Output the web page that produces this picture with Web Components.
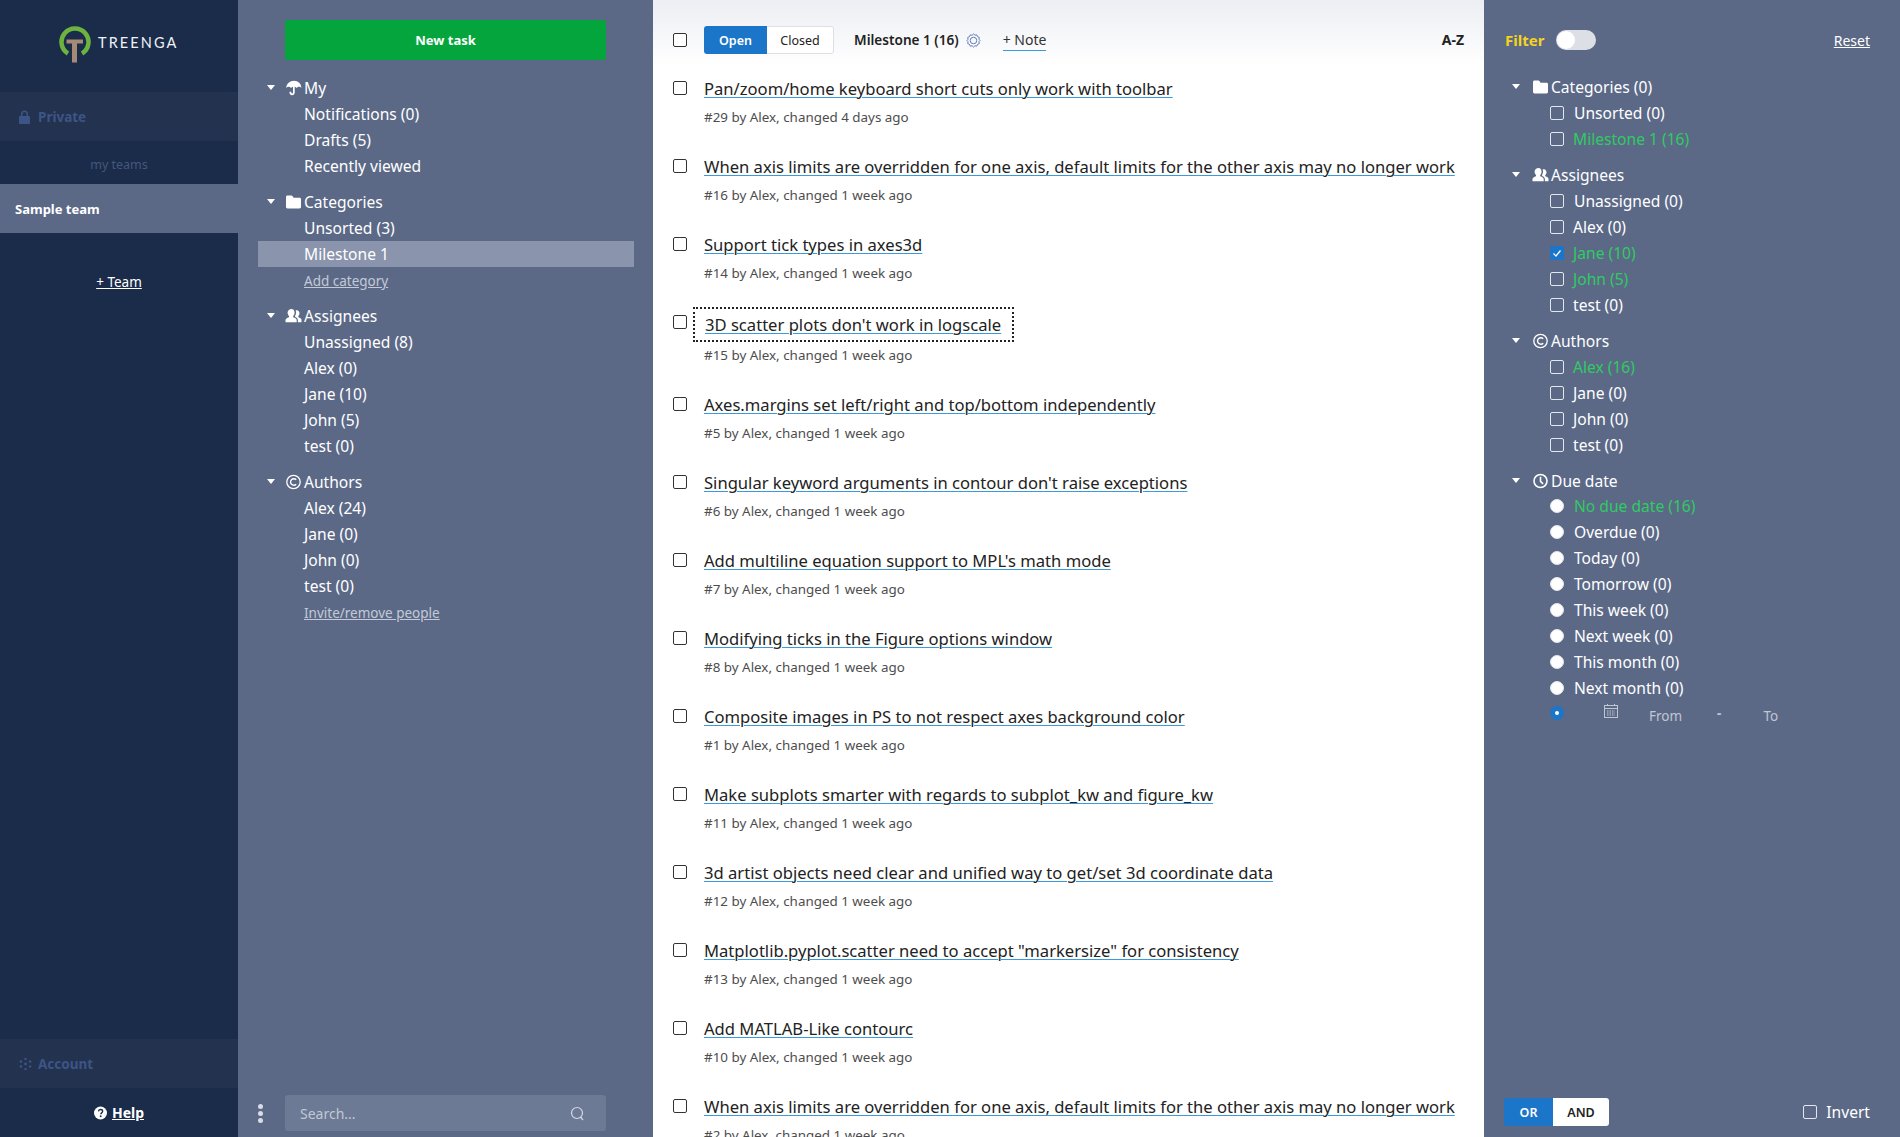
<!DOCTYPE html>
<html lang="en">
<head>
<meta charset="utf-8">
<title>Treenga</title>
<style>
  html, body { margin: 0; height: 100%; overflow: hidden; }
  body { font-family: "Noto Sans", "Open Sans", sans-serif; font-size: 15.6px; }
</style>
</head>
<body>
<app-shell>
  <team-rail slot="rail"></team-rail>

  <nav-panel slot="nav">
    <tree-group label="My" icon="umbrella">
      <tree-row>Notifications (0)</tree-row>
      <tree-row>Drafts (5)</tree-row>
      <tree-row>Recently viewed</tree-row>
    </tree-group>
    <tree-group label="Categories" icon="folder">
      <tree-row>Unsorted (3)</tree-row>
      <tree-row selected>Milestone 1</tree-row>
      <tree-row link>Add category</tree-row>
    </tree-group>
    <tree-group label="Assignees" icon="users">
      <tree-row>Unassigned (8)</tree-row>
      <tree-row>Alex (0)</tree-row>
      <tree-row>Jane (10)</tree-row>
      <tree-row>John (5)</tree-row>
      <tree-row>test (0)</tree-row>
    </tree-group>
    <tree-group label="Authors" icon="copyright">
      <tree-row>Alex (24)</tree-row>
      <tree-row>Jane (0)</tree-row>
      <tree-row>John (0)</tree-row>
      <tree-row>test (0)</tree-row>
      <tree-row link>Invite/remove people</tree-row>
    </tree-group>
  </nav-panel>

  <task-list slot="main">
    <task-row num="29" age="4 days ago">Pan/zoom/home keyboard short cuts only work with toolbar</task-row>
    <task-row num="16">When axis limits are overridden for one axis, default limits for the other axis may no longer work</task-row>
    <task-row num="14">Support tick types in axes3d</task-row>
    <task-row num="15" focused>3D scatter plots don't work in logscale</task-row>
    <task-row num="5">Axes.margins set left/right and top/bottom independently</task-row>
    <task-row num="6">Singular keyword arguments in contour don't raise exceptions</task-row>
    <task-row num="7">Add multiline equation support to MPL's math mode</task-row>
    <task-row num="8">Modifying ticks in the Figure options window</task-row>
    <task-row num="1">Composite images in PS to not respect axes background color</task-row>
    <task-row num="11">Make subplots smarter with regards to subplot_kw and figure_kw</task-row>
    <task-row num="12">3d artist objects need clear and unified way to get/set 3d coordinate data</task-row>
    <task-row num="13">Matplotlib.pyplot.scatter need to accept "markersize" for consistency</task-row>
    <task-row num="10">Add MATLAB-Like contourc</task-row>
    <task-row num="2">When axis limits are overridden for one axis, default limits for the other axis may no longer work</task-row>
  </task-list>

  <filter-panel slot="filter">
    <tree-group label="Categories (0)" icon="folder">
      <filter-row nudge>Unsorted (0)</filter-row>
      <filter-row active>Milestone 1 (16)</filter-row>
    </tree-group>
    <tree-group label="Assignees" icon="users">
      <filter-row nudge>Unassigned (0)</filter-row>
      <filter-row>Alex (0)</filter-row>
      <filter-row active checked>Jane (10)</filter-row>
      <filter-row active>John (5)</filter-row>
      <filter-row>test (0)</filter-row>
    </tree-group>
    <tree-group label="Authors" icon="copyright">
      <filter-row active>Alex (16)</filter-row>
      <filter-row>Jane (0)</filter-row>
      <filter-row>John (0)</filter-row>
      <filter-row>test (0)</filter-row>
    </tree-group>
    <tree-group label="Due date" icon="clock" tight>
      <filter-row radio active nudge>No due date (16)</filter-row>
      <filter-row radio nudge>Overdue (0)</filter-row>
      <filter-row radio nudge>Today (0)</filter-row>
      <filter-row radio nudge>Tomorrow (0)</filter-row>
      <filter-row radio nudge>This week (0)</filter-row>
      <filter-row radio nudge>Next week (0)</filter-row>
      <filter-row radio nudge>This month (0)</filter-row>
      <filter-row radio nudge>Next month (0)</filter-row>
      <date-range></date-range>
    </tree-group>
  </filter-panel>
</app-shell>

<script>
const ICONS = {
  umbrella: '<path fill="currentColor" d="M8.600 .8C4.400 .8 1 3.900.7 8c.7-.9 1.500-1.300 2.400-1.300 1 0 1.800.5 2.400 1.300.5-.7 1.200-1.200 2-1.300v5.800c0 .6-.3 1-.9 1-.5 0-.8-.4-.8-1v-.7H4v.7c0 1.500 1 2.700 2.600 2.700 1.500 0 2.600-1.200 2.600-2.700V6.700c.8.100 1.500.6 2 1.300.6-.8 1.400-1.300 2.400-1.300.9 0 1.700.4 2.300 1.300C15.700 3.900 12.800 .8 8.600 .8z"/>',
  folder: '<path fill="currentColor" d="M.5 3.200C.5 2.300 1.100 1.600 2 1.600h3.800c.6 0 1 .2 1.300.7L8.100 3.700h6c.8 0 1.400.6 1.400 1.400v8c0 .8-.6 1.400-1.400 1.400H2c-.9 0-1.500-.6-1.500-1.400z"/>',
  users: '<path fill="currentColor" d="M6 1c1.900 0 3.100 1.600 3.100 3.600 0 1.400-.6 2.700-1.400 3.300v1.400c2 .6 3.500 1.600 3.500 2.900v2.100H0v-2.100c0-1.300 1.500-2.300 3.500-2.900V7.900c-.8-.6-1.400-1.900-1.400-3.300C2.100 2.600 4.100 1 6 1z"/><path fill="currentColor" d="M11.400 2.200c1.600 0 2.600 1.400 2.600 3.100 0 1.200-.5 2.200-1.200 2.700v1.200c1.600.5 3.200 1.300 3.200 2.400v2.700h-3.600v-2.100c0-1.400-1-2.500-2.800-3.200V7.800c.6-.8 1-1.900 1-3.200 0-.8-.2-1.600-.5-2.200.3-.1.800-.2 1.300-.2z"/>',
  copyright: '<circle cx="8" cy="8" r="6.700" fill="none" stroke="currentColor" stroke-width="1.300"/><path fill="none" stroke="currentColor" stroke-width="1.400" d="M10.700 5.700A3.300 3.300 0 1 0 10.700 10.300"/>',
  clock: '<circle cx="8" cy="8" r="6.500" fill="none" stroke="currentColor" stroke-width="1.600"/><path fill="none" stroke="currentColor" stroke-width="1.600" d="M8 3.800V8.300l2.600 2.600"/>'
};

function define(name, css, html) {
  const cls = class extends HTMLElement {
    constructor() {
      super();
      this.attachShadow({ mode: 'open' });
    }
    connectedCallback() {
      const body = typeof html === 'function' ? html(this) : html;
      this.shadowRoot.innerHTML = `<style>${css}</style>${body}`;
    }
  };
  customElements.define(name, cls);
}

define('app-shell', `
  :host {
    display: grid;
    grid-template-columns: 238px 415px 831px 416px;
    height: 100vh;
    overflow: hidden;
  }
  ::slotted(*) { min-height: 0; min-width: 0; }
`, `<slot name="rail"></slot><slot name="nav"></slot><slot name="main"></slot><slot name="filter"></slot>`);

define('team-rail', `
  :host {
    display: flex;
    flex-direction: column;
    background: #1a2c4a;
    color: #fff;
    height: 100vh;
  }
  .logo { height: 92px; display: flex; align-items: flex-start; padding: 26px 0 0 59px; box-sizing: border-box; flex: none; }
  .logo svg { flex: none; display: block; }
  .word { font-family: "Lato", "Noto Sans", sans-serif; font-size: 14.500px; letter-spacing: 2.100px; color: #f0f2f5; margin: 8px 0 0 7px; line-height: 18px; }
  .band { height: 49px; background: #22324f; display: flex; align-items: center; color: #3d5586; font-weight: 700; font-size: 13.500px; padding-left: 19px; flex: none; }
  .band svg { margin-right: 8px; flex: none; }
  .band.account svg { margin-right: 6px; }
  .caption { height: 43px; display: flex; align-items: center; justify-content: center; color: #44577c; font-size: 12.500px; padding-top: 4px; box-sizing: border-box; }
  .team { height: 49px; background: #5b6987; display: flex; align-items: center; padding-left: 15px; font-size: 13px; font-weight: 700; }
  .add { text-align: center; margin-top: 39px; font-size: 13.500px; line-height: 20px; }
  .add a, .help a { color: #fff; text-decoration: underline; }
  .spacer { flex: 1; }
  .help { height: 49px; display: flex; align-items: center; justify-content: center; gap: 5px; font-weight: 700; font-size: 14px; box-sizing: border-box; }
`, `
  <div class="logo">
    <svg width="32" height="38" viewBox="0 0 32 38">
      <path d="M9 27.500A13.500 13.500 0 1 1 23 27.500" fill="none" stroke="#6cb33f" stroke-width="4.500"/>
      <path d="M7.500 13.500h16.500v4h-6v19h-5v-19h-5.500z" fill="#a68a75"/>
    </svg>
    <span class="word">TREENGA</span>
  </div>
  <div class="band">
    <svg width="11" height="14" viewBox="0 0 11 14"><path fill="#3d5586" d="M2 6V4a3.500 3.500 0 0 1 7 0v2h1a1 1 0 0 1 1 1v6a1 1 0 0 1-1 1H1a1 1 0 0 1-1-1V7a1 1 0 0 1 1-1zm1.500 0h4V4a2 2 0 0 0-4 0z"/></svg>
    Private
  </div>
  <div class="caption">my teams</div>
  <div class="team">Sample team</div>
  <div class="add"><a>+ Team</a></div>
  <div class="spacer"></div>
  <div class="band account">
    <svg width="13" height="14" viewBox="0 0 14 14"><g fill="#3d5586"><circle cx="7" cy="1.500" r="1.300"/><circle cx="7" cy="12.500" r="1.300"/><circle cx="2" cy="4.300" r="1.300"/><circle cx="12" cy="4.300" r="1.300"/><circle cx="2" cy="9.700" r="1.300"/><circle cx="12" cy="9.700" r="1.300"/><circle cx="7" cy="7" r="1.500"/></g></svg>
    Account
  </div>
  <div class="help">
    <svg width="13" height="14" viewBox="0 0 14 14"><circle cx="7" cy="7" r="7" fill="#fff"/><path d="M4.800 5.300C4.900 4 5.900 3.300 7.100 3.300c1.300 0 2.200.8 2.200 1.900 0 1.700-2 1.700-2 3.200" fill="none" stroke="#1a2c4a" stroke-width="1.500"/><circle cx="7.200" cy="10.500" r="1" fill="#1a2c4a"/></svg>
    <a>Help</a>
  </div>
`);

define('nav-panel', `
  :host {
    display: flex;
    flex-direction: column;
    background: #5b6987;
    color: #fff;
    height: 100vh;
    box-sizing: border-box;
    padding: 20px 19px 6px 20px;
    --tree-label: 46px;
    --tree-arrow: 9px;
  }
  .new {
    align-self: flex-start;
    margin-left: 27px;
    width: 321px;
    height: 40px;
    background: #03a53c;
    border-radius: 2px;
    display: flex;
    align-items: center;
    justify-content: center;
    font-weight: 700;
    font-size: 13px;
    flex: none;
    margin-bottom: 15px;
  }
  .tree { flex: 1; }
  .foot { display: flex; align-items: center; height: 36px; flex: none; }
  .dots { width: 27px; box-sizing: border-box; display: flex; flex-direction: column; gap: 2px; }
  .dots i { width: 5px; height: 5px; border-radius: 50%; background: #d8dce5; display: block; }
  .search {
    width: 321px; height: 36px; background: #6d7a95; border-radius: 3px;
    display: flex; align-items: center; justify-content: space-between;
    padding: 0 21px 0 15px; box-sizing: border-box;
    color: #c2c8d4; font-size: 14px;
  }
`, `
  <div class="new">New task</div>
  <div class="tree"><slot></slot></div>
  <div class="foot">
    <div class="dots"><i></i><i></i><i></i></div>
    <div class="search">
      <span>Search...</span>
      <svg width="15" height="15" viewBox="0 0 15 15" fill="none" stroke="#d5d9e2" stroke-width="1.200"><circle cx="7" cy="7" r="5.500"/><path d="M10.500 11l2.500 3"/></svg>
    </div>
  </div>
`);

define('tree-group', `
  :host { display: block; margin-bottom: 10px; }
  .head { display: flex; align-items: center; height: 26px; position: relative; padding-left: var(--tree-label); }
  :host([tight]) .head { margin-bottom: -1px; }
  .arrow { position: absolute; left: var(--tree-arrow); top: 10px; width: 0; height: 0; border: 4px solid transparent; border-top: 5px solid #fff; border-bottom: 0; }
  svg { position: absolute; left: calc(var(--tree-label) - 19px); top: 5px; }
`, (el) => `
  <div class="head">
    <span class="arrow"></span>
    <svg width="17" height="16" viewBox="0 0 16 16">${ICONS[el.getAttribute('icon')]}</svg>
    <span>${el.getAttribute('label')}</span>
  </div>
  <slot></slot>
`);

define('tree-row', `
  :host { display: flex; align-items: center; height: 26px; padding-left: var(--tree-label); }
  :host([selected]) { background: #8a94ac; }
  :host([link]) { color: #c3c9d6; font-size: 13.500px; text-decoration: underline; padding-top: 2px; box-sizing: border-box; }
`, `<slot></slot>`);

define('task-list', `
  :host {
    display: block;
    background: #fff;
    color: #222;
    height: 100vh;
    overflow: hidden;
  }
  .bar {
    height: 74px;
    box-sizing: border-box;
    padding: 26px 20px 0 20px;
    display: flex;
    align-items: flex-start;
    background: linear-gradient(#eceef3, #fff 66px);
  }
  .box { width: 14px; height: 14px; margin: 7px 17px 0 0; border: 1px solid #333; border-radius: 2px; box-sizing: border-box; background: #fff; flex: none; }
  .seg { display: flex; width: 130px; height: 28px; font-size: 12.500px; border-radius: 3px; overflow: hidden; flex: none; }
  .seg b { width: 63px; background: #1b75c8; color: #fff; font-weight: 600; display: flex; align-items: center; justify-content: center; }
  .seg span { flex: 1; border: 1px solid #dcdfe6; border-left: 0; border-radius: 0 3px 3px 0; background: #fff; box-sizing: border-box; display: flex; align-items: center; justify-content: center; }
  .name { margin-left: 20px; font-weight: 600; font-size: 13.600px; line-height: 28px; }
  .gear { margin: 7px 0 0 7px; flex: none; }
  .note { margin-left: 22px; font-size: 14px; line-height: 20px; margin-top: 4px; color: #333; border-bottom: 1px solid #3a9bdc; height: 20px; }
  .sort { margin-left: auto; font-weight: 700; font-size: 14px; line-height: 28px; }
`, `
  <div class="bar">
    <span class="box"></span>
    <div class="seg"><b>Open</b><span>Closed</span></div>
    <span class="name">Milestone 1 (16)</span>
    <svg class="gear" width="15" height="15" viewBox="0 0 16 16" fill="none" stroke="#5f75b5" stroke-width="1"><path d="M8 1l1.500 1.400 2-.4.800 1.900 1.900.8-.4 2L15 8l-1.200 1.300.4 2-1.900.8-.8 1.900-2-.4L8 15l-1.500-1.400-2 .4-.8-1.900-1.900-.8.4-2L1 8l1.200-1.300-.4-2 1.900-.8.8-1.900 2 .4z"/><circle cx="8" cy="8" r="3.500"/></svg>
    <span class="note">+ Note</span>
    <span class="sort">A-Z</span>
  </div>
  <slot></slot>
`);

define('task-row', `
  :host { display: block; padding: 0 20px; height: 78px; box-sizing: border-box; position: relative; }
  :host([focused]) { height: 82px; padding-top: 2px; }
  .line { display: flex; align-items: flex-start; height: 30px; }
  .box { width: 14px; height: 14px; border: 1px solid #333; border-radius: 2px; box-sizing: border-box; margin: 7px 17px 0 0; flex: none; }
  .frame { margin-top: 3px; }
  .title { font-size: 16.600px; line-height: 23px; color: #222; text-decoration: underline; text-decoration-color: #3a9bdc; text-decoration-thickness: 1px; text-underline-offset: 2px; white-space: nowrap; }
  :host([focused]) .line { height: 34px; }
  :host([focused]) .box { margin-top: 5px; }
  :host([focused]) .frame { border: 2px dotted #222; margin: -3px 0 0 -11px; padding: 4px 11px 2px 10px; height: 35px; box-sizing: border-box; }
  .meta { font-size: 13.400px; line-height: 22px; margin: 2px 0 0 31px; color: #4d4d4d; }
  :host([focused]) .meta { margin-top: 0; }
`, (el) => `
  <div class="line">
    <span class="box"></span>
    <div class="frame"><a class="title"><slot></slot></a></div>
  </div>
  <div class="meta">#${el.getAttribute('num')} by Alex, changed ${el.getAttribute('age') || '1 week ago'}</div>
`);

define('filter-panel', `
  :host {
    display: flex;
    flex-direction: column;
    background: #5b6987;
    color: #fff;
    height: 100vh;
    box-sizing: border-box;
    padding: 30px 30px 11px 21px;
    --tree-label: 46px;
    --tree-arrow: 7px;
  }
  .top { display: flex; align-items: center; height: 20px; margin-bottom: 24px; flex: none; }
  .top b { color: #f5d21f; font-size: 15px; font-weight: 700; }
  .switch { width: 40px; height: 20px; background: #dcdfe6; border-radius: 10px; margin-left: 12px; position: relative; }
  .switch i { position: absolute; left: 1px; top: 1px; width: 18px; height: 18px; border-radius: 50%; background: #fff; }
  .reset { margin-left: auto; text-decoration: underline; font-size: 14px; }
  .tree { flex: 1; }
  .foot { display: flex; align-items: center; flex: none; height: 28px; margin-left: -1px; }
  .logic { display: flex; width: 105px; height: 28px; border-radius: 3px; overflow: hidden; font-size: 12.500px; font-weight: 600; }
  .logic b { width: 49px; background: #1b75c8; font-weight: 600; display: flex; align-items: center; justify-content: center; }
  .logic span { flex: 1; background: #fff; color: #222; display: flex; align-items: center; justify-content: center; }
  .box { width: 14px; height: 14px; border: 1px solid #e3e6ec; border-radius: 2px; box-sizing: border-box; margin: 0 9px 0 auto; }
`, `
  <div class="top"><b>Filter</b><span class="switch"><i></i></span><span class="reset">Reset</span></div>
  <div class="tree"><slot></slot></div>
  <div class="foot">
    <div class="logic"><b>OR</b><span>AND</span></div>
    <span class="box"></span>
    <span>Invert</span>
  </div>
`);

define('filter-row', `
  :host { display: flex; align-items: center; height: 26px; padding-left: 45px; }
  :host([active]) { color: #2fcb62; }
  .mark { width: 14px; height: 14px; border: 1px solid #e3e6ec; border-radius: 2px; box-sizing: border-box; margin-right: 9px; flex: none; display: block; }
  :host([nudge]) .mark { margin-right: 10px; }
  :host([radio]) .mark { background: #fff; border-radius: 50%; margin-right: 10px; }
  :host([checked]) .mark { background: #1b75c8; border-color: #1b75c8; }
  svg { display: block; }
`, (el) => `
  <span class="mark">${el.hasAttribute('checked') ? '<svg width="12" height="12" viewBox="0 0 12 12"><path d="M2.500 6.500l2.500 2.500 4.500-5.500" fill="none" stroke="#fff" stroke-width="1.200"/></svg>' : ''}</span>
  <slot></slot>
`);

define('date-range', `
  :host { display: flex; align-items: flex-start; height: 30px; padding-left: 45px; color: #c0c6d2; font-size: 13.500px; }
  .radio { width: 14px; height: 14px; border-radius: 50%; background: #1b75c8; margin-top: 5px; display: flex; align-items: center; justify-content: center; flex: none; }
  .radio i { width: 4px; height: 4px; border-radius: 50%; background: #fff; }
  svg { margin: 3px 0 0 40px; flex: none; }
  .from { margin: 5px 0 0 31px; line-height: 20px; }
  .dash { margin: 2px 0 0 35px; font-weight: 700; line-height: 20px; }
  .to { margin: 5px 0 0 42px; line-height: 20px; }
`, `
  <span class="radio"><i></i></span>
  <svg width="14" height="14" viewBox="0 0 14 14" fill="none" stroke="#c0c6d2"><rect x=".5" y="1.500" width="13" height="12"/><path d="M.5 4.500h13M3.500 0v2M10.500 0v2"/><path d="M3 7h8M3 9h8M3 11h8" stroke-dasharray="1.500 1"/></svg>
  <span class="from">From</span>
  <span class="dash">-</span>
  <span class="to">To</span>
`);
</script>
</body>
</html>
